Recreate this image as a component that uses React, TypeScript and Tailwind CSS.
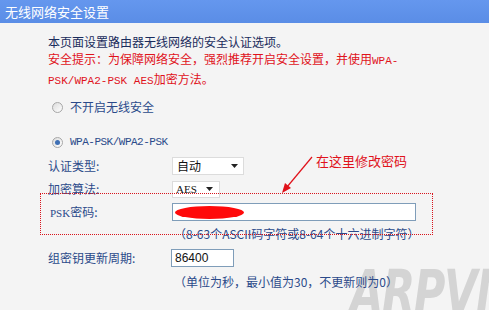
import React from "react";

function Radio({ checked }: { checked?: boolean }) {
  return (
    <span className="flex h-[11px] w-[11px] items-center justify-center rounded-full border border-[#a7a7a7] bg-gradient-to-br from-[#dcdcdc] to-white">
      {checked && <span className="h-[5px] w-[5px] rounded-full bg-[#3e6fb4]" />}
    </span>
  );
}

function Caret() {
  return (
    <svg width="7" height="4" viewBox="0 0 7 4" className="shrink-0">
      <path d="M0 0h7L3.5 4z" fill="#222" />
    </svg>
  );
}

export default function App() {
  return (
    <div className="relative h-[310px] w-[489px] overflow-hidden bg-[#f4f4f4] font-['Noto_Sans_CJK_SC',sans-serif] text-[12px]">
      {/* Title bar */}
      <div className="flex h-[23px] items-center bg-gradient-to-b from-[#6597ee] to-[#5a8de6] pl-[5px] text-[13px] leading-none text-white">
        无线网络安全设置
      </div>

      {/* Watermark */}
      <div className="pointer-events-none absolute left-[350px] top-[262px] origin-left scale-x-[0.72] select-none font-['DejaVu_Sans','Liberation_Sans',sans-serif] text-[60px] font-black italic leading-none tracking-[-2px] text-[#d4d4d4]">
        ARPVN
      </div>

      <div className="relative pl-[48px] pt-[10px]">
        {/* Intro */}
        <p className="leading-[17px] text-[#1a2c5c]">本页面设置路由器无线网络的安全认证选项。</p>
        <p className="leading-[17px] text-[#e0121b]">
          安全提示：为保障网络安全，强烈推荐开启安全设置，并使用<span className="font-['Liberation_Mono',monospace] text-[11px]">WPA-</span>
        </p>
        <p className="leading-[17px] text-[#e0121b]">
          <span className="font-['Liberation_Mono',monospace] text-[11px]">PSK/WPA2-PSK AES</span>加密方法。
        </p>

        {/* Radios */}
        <div className="mt-[9px] flex h-[16px] items-center gap-[7px] pl-[4px] text-[#2b4a8a]">
          <Radio />
          <span>不开启无线安全</span>
        </div>
        <div className="mt-[19px] flex h-[16px] items-center gap-[7px] pl-[4px] text-[#2b4a8a]">
          <Radio checked />
          <span className="font-['Liberation_Mono',monospace] text-[11px] tracking-[-0.5px]">WPA-PSK/WPA2-PSK</span>
        </div>

        {/* Auth type */}
        <div className="mt-[4px] flex h-[24px] items-center text-[#2b4a8a]">
          <span className="w-[124px]">认证类型:</span>
          <div className="flex h-[18px] w-[72px] items-center justify-between border border-[#dcdcdc] bg-white pl-[4px] pr-[5px] text-[#111]">
            <span>自动</span>
            <Caret />
          </div>
        </div>

        {/* Cipher */}
        <div className="flex h-[22px] items-center text-[#2b4a8a]">
          <span className="w-[124px]">加密算法:</span>
          <div className="flex h-[17px] w-[48px] items-center justify-between border border-[#dcdcdc] bg-white pl-[3px] pr-[6px] font-['Liberation_Serif',serif] text-[11px] text-[#111]">
            <span>AES</span>
            <Caret />
          </div>
        </div>

        {/* PSK */}
        <div className="flex h-[24px] items-center text-[#2b4a8a]">
          <span className="w-[124px] pl-[2px]">
            <span className="font-['Liberation_Serif',serif] text-[11px]">PSK</span>密码:
          </span>
          <div className="relative h-[18px] w-[244px] border border-[#7f9db9] bg-white">
            <span className="absolute left-[2px] top-[2px] h-[13px] w-[69px] rounded-[50%] bg-[#ff0a0a]" />
          </div>
        </div>
        <div className="flex h-[20px] items-center pl-[126px] text-[#2b4a8a]">
          （8-63个ASCII码字符或8-64个十六进制字符）
        </div>

        {/* Group key */}
        <div className="mt-[2px] flex h-[24px] items-center text-[#2b4a8a]">
          <span className="w-[123px]">组密钥更新周期:</span>
          <div className="flex h-[18px] w-[63px] items-center border border-[#7f9db9] bg-white pl-[3px] font-['Liberation_Sans',sans-serif] text-[12px] text-[#111]">
            86400
          </div>
        </div>
        <div className="mt-[2px] flex h-[20px] items-center pl-[126px] text-[#2b4a8a]">
          （单位为秒，最小值为30，不更新则为0）
        </div>
      </div>

      {/* Annotation overlay */}
      <div className="pointer-events-none absolute left-[40px] top-[193px] h-[42px] w-[393px] border border-dotted border-[#d8141c]" />
      <div className="pointer-events-none absolute left-[316px] top-[154px] text-[13px] leading-none text-[#e0121b]">
        在这里修改密码
      </div>
      <svg className="pointer-events-none absolute left-[278px] top-[154px]" width="40" height="42" viewBox="0 0 40 42">
        <path d="M34 3L9 33" stroke="#e0121b" strokeWidth="1.2" fill="none" />
        <path d="M4 39l3-10 6 5z" fill="#e0121b" />
      </svg>
    </div>
  );
}
